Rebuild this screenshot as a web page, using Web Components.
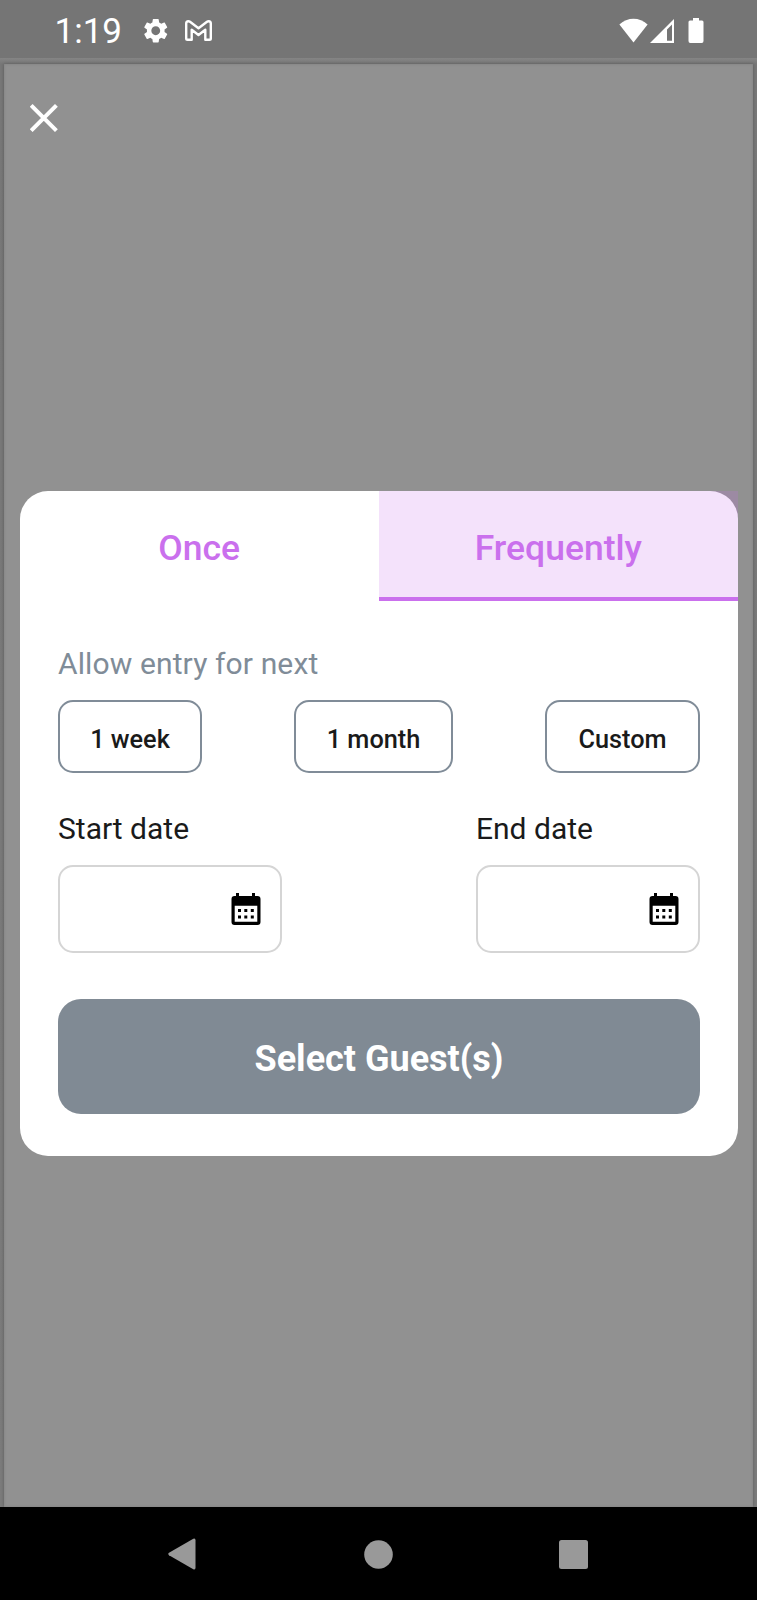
<!DOCTYPE html>
<html lang="en">
<head>
<meta charset="utf-8">
<meta name="viewport" content="width=device-width, initial-scale=1">
<title>Allow entry</title>
<style>
  body {
    margin: 0;
    font-family: Roboto, "Liberation Sans", sans-serif;
    color: #1a1a1a;
  }
</style>
</head>
<body>
<guest-screen>
  <status-bar slot="status" time="1:19"></status-bar>
  <entry-card>
    <entry-tab slot="tabs">Once</entry-tab>
    <entry-tab slot="tabs" selected>Frequently</entry-tab>
    <range-chip slot="ranges" style="width:144px">1 week</range-chip>
    <range-chip slot="ranges" style="width:159px">1 month</range-chip>
    <range-chip slot="ranges" style="width:155px">Custom</range-chip>
    <date-field slot="dates">Start date</date-field>
    <date-field slot="dates">End date</date-field>
    <submit-button slot="action">Select Guest(s)</submit-button>
  </entry-card>
  <nav-bar slot="nav"></nav-bar>
</guest-screen>

<script>
class GuestScreen extends HTMLElement {
  constructor() {
    super();
    this.attachShadow({ mode: "open" });
    this.shadowRoot.innerHTML = `
      <style>
        :host {
          display: flex;
          flex-direction: column;
          width: 757px;
          height: 1600px;
          overflow: hidden;
          background: #757575;
        }
        .frame {
          flex: 1;
          display: flex;
          padding: 6px 4px 0;
          background: linear-gradient(#858585, #777 6px, #7b7b7b);
        }
        .page {
          flex: 1;
          display: flex;
          flex-direction: column;
          background: #919191;
          box-shadow: 0 0 3px rgba(0,0,0,0.25), inset 0 0 3px rgba(0,0,0,0.12);
        }
        .close {
          display: block;
          width: 28px;
          height: 28px;
          margin: 40px 0 0 26px;
        }
        .card {
          margin: 359px 15px 0 15.5px;
        }
      </style>
      <slot name="status"></slot>
      <div class="frame">
        <div class="page">
          <svg class="close" viewBox="0 0 28 28" fill="none" stroke="#fff" stroke-width="4">
            <path d="M1.2 1.4 26.4 26.6M26.4 1.4 1.2 26.6"/>
          </svg>
          <div class="card"><slot></slot></div>
        </div>
      </div>
      <slot name="nav"></slot>
    `;
  }
}

class StatusBar extends HTMLElement {
  constructor() {
    super();
    this.attachShadow({ mode: "open" });
    this.shadowRoot.innerHTML = `
      <style>
        :host {
          display: flex;
          align-items: center;
          box-sizing: border-box;
          height: 58px;
          padding: 3px 53.5px 0 54.5px;
          background: #757575;
          color: white;
        }
        .time {
          width: 86.5px;
          padding-top: 2px;
          font-size: 35px;
          line-height: 40px;
        }
        svg { display: block; fill: white; }
        .mail { margin-left: 14.5px; }
        .wifi { margin-left: auto; }
        .signal { margin-left: 2.5px; }
        .battery { margin-left: 13.5px; }
      </style>
      <span class="time"></span>
      <svg width="29.5" height="29.5" viewBox="0 0 24 24">
        <path d="M19.14 12.94c.04-.3.06-.61.06-.94 0-.32-.02-.64-.07-.94l2.03-1.58c.18-.14.23-.41.12-.61l-1.92-3.32c-.12-.22-.37-.29-.59-.22l-2.39.96c-.5-.38-1.03-.7-1.62-.94l-.36-2.54c-.04-.24-.24-.41-.48-.41h-3.84c-.24 0-.43.17-.47.41l-.36 2.54c-.59.24-1.13.57-1.62.94l-2.39-.96c-.22-.08-.47 0-.59.22L2.74 8.87c-.12.21-.08.47.12.61l2.03 1.58c-.05.3-.09.63-.09.94s.02.64.07.94l-2.03 1.58c-.18.14-.23.41-.12.61l1.92 3.32c.12.22.37.29.59.22l2.39-.96c.5.38 1.03.7 1.62.94l.36 2.54c.05.24.24.41.48.41h3.84c.24 0 .44-.17.47-.41l.36-2.54c.59-.24 1.13-.56 1.62-.94l2.39.96c.22.08.47 0 .59-.22l1.92-3.32c.12-.22.07-.47-.12-.61l-2.01-1.58zM12 15.6c-1.98 0-3.6-1.62-3.6-3.6s1.62-3.6 3.6-3.6 3.6 1.62 3.6 3.6-1.62 3.6-3.6 3.6z"/>
      </svg>
      <svg class="mail" width="27" height="21" viewBox="0 0 27 21">
        <path d="M1.2 18.5V3.5Q1.2 1.2 3.3 1.2 4.2 1.2 5 1.8L13.5 8.2 22 1.8Q22.8 1.2 23.7 1.2 25.8 1.2 25.8 3.5V18.5Q25.8 19.8 24.5 19.8H20.3V9.8L13.5 15 6.7 9.8V19.8H2.5Q1.2 19.8 1.2 18.5Z" fill="none" stroke="#fff" stroke-width="2.4" stroke-linejoin="round"/>
      </svg>
      <svg class="wifi" width="29" height="25" viewBox="0 0 29 25">
        <path d="M0.4 6.6C8.5-1.3 20.5-1.3 28.6 6.6L14.5 24.5Z"/>
      </svg>
      <svg class="signal" width="24" height="24" viewBox="0 0 24 24">
        <path fill-rule="evenodd" d="M24 0V24H0ZM22 5.6 17 10.6V21.8H22Z"/>
      </svg>
      <svg class="battery" width="16" height="25" viewBox="0 0 16 25">
        <path d="M5 0H11V2.5H14Q15.5 2.5 15.5 4V23Q15.5 25 13.7 25H2.3Q0.5 25 0.5 23V4Q0.5 2.5 2 2.5H5Z"/>
      </svg>
    `;
  }
  connectedCallback() {
    this.shadowRoot.querySelector(".time").textContent = this.getAttribute("time");
  }
}

class EntryCard extends HTMLElement {
  constructor() {
    super();
    this.attachShadow({ mode: "open" });
    this.shadowRoot.innerHTML = `
      <style>
        :host {
          display: block;
          box-sizing: border-box;
          height: 665px;
          border-radius: 28px;
          background: white;
        }
        .tabs { display: flex; }
        .body {
          display: flex;
          flex-direction: column;
          padding: 45px 38px 0 38.5px;
        }
        .label {
          color: #808c98;
          font-size: 30px;
          line-height: 36px;
          letter-spacing: 0.12px;
        }
        .ranges, .dates {
          display: flex;
          justify-content: space-between;
        }
        .ranges { margin-top: 18px; }
        .dates { margin: 38px 0 46px; }
      </style>
      <div class="tabs"><slot name="tabs"></slot></div>
      <div class="body">
        <span class="label">Allow entry for next</span>
        <div class="ranges"><slot name="ranges"></slot></div>
        <div class="dates"><slot name="dates"></slot></div>
        <slot name="action"></slot>
      </div>
    `;
  }
}

class EntryTab extends HTMLElement {
  constructor() {
    super();
    this.attachShadow({ mode: "open" });
    this.shadowRoot.innerHTML = `
      <style>
        :host {
          flex: 1;
          display: flex;
          align-items: center;
          justify-content: center;
          box-sizing: border-box;
          height: 110px;
          padding-top: 8px;
          border-bottom: 4px solid transparent;
          color: #ca70ed;
          font-size: 35.5px;
          font-weight: 500;
        }
        :host([selected]) {
          background: rgba(202,112,237,0.2);
          border-bottom-color: #ca70ed;
        }
      </style>
      <slot></slot>
    `;
  }
}

class RangeChip extends HTMLElement {
  constructor() {
    super();
    this.attachShadow({ mode: "open" });
    this.shadowRoot.innerHTML = `
      <style>
        :host {
          display: flex;
          align-items: center;
          justify-content: center;
          box-sizing: border-box;
          height: 73px;
          padding-top: 5px;
          border: 2px solid #808c98;
          border-radius: 15px;
          font-size: 25.3px;
          font-weight: 500;
        }
      </style>
      <slot></slot>
    `;
  }
}

class DateField extends HTMLElement {
  constructor() {
    super();
    this.attachShadow({ mode: "open" });
    this.shadowRoot.innerHTML = `
      <style>
        :host { display: block; width: 224px; }
        .label {
          display: block;
          font-size: 30px;
          line-height: 36px;
        }
        .box {
          display: flex;
          align-items: center;
          justify-content: flex-end;
          box-sizing: border-box;
          height: 88px;
          margin-top: 18px;
          padding-right: 19px;
          border: 2px solid #d5d5d5;
          border-radius: 15px;
        }
      </style>
      <span class="label"><slot></slot></span>
      <div class="box">
        <svg width="30" height="32" viewBox="0 0 30 32">
          <path fill-rule="evenodd" d="M5 0H8V3H21V0H24V3H26.5Q29.5 3 29.5 6V29Q29.5 32 26.5 32H3.5Q0.5 32 0.5 29V6Q0.5 3 3.5 3H5ZM3.7 12.8V28.8H26.3V12.8Z"/>
          <path d="M7 16h3v3h-3zM13.3 16h3v3h-3zM19.8 16h3v3h-3zM7 22.5h3v3h-3zM13.3 22.5h3v3h-3zM19.8 22.5h3v3h-3z"/>
        </svg>
      </div>
    `;
  }
}

class SubmitButton extends HTMLElement {
  constructor() {
    super();
    this.attachShadow({ mode: "open" });
    this.shadowRoot.innerHTML = `
      <style>
        :host {
          display: flex;
          align-items: center;
          justify-content: center;
          box-sizing: border-box;
          height: 115px;
          padding-top: 5px;
          border-radius: 23px;
          background: #808a94;
          color: white;
          font-size: 36px;
          font-weight: 700;
        }
      </style>
      <slot></slot>
    `;
  }
}

class NavBar extends HTMLElement {
  constructor() {
    super();
    this.attachShadow({ mode: "open" });
    this.shadowRoot.innerHTML = `
      <style>
        :host {
          display: flex;
          align-items: center;
          justify-content: space-between;
          box-sizing: border-box;
          height: 93px;
          padding: 1px 169px 0 168px;
          background: black;
        }
        svg { fill: #999; }
      </style>
      <svg width="29" height="32" viewBox="0 0 29 32">
        <path d="M1 14.8 25.3 .8Q27.5 0 27.5 2.2V29.8Q27.5 32 25.3 31.2L1 17.2Q-.5 16 1 14.8Z"/>
      </svg>
      <svg width="29" height="29" viewBox="0 0 29 29"><circle cx="14.5" cy="14.5" r="14.3"/></svg>
      <svg width="29" height="29" viewBox="0 0 29 29"><rect width="29" height="29" rx="2.5"/></svg>
    `;
  }
}

customElements.define("guest-screen", GuestScreen);
customElements.define("status-bar", StatusBar);
customElements.define("entry-card", EntryCard);
customElements.define("entry-tab", EntryTab);
customElements.define("range-chip", RangeChip);
customElements.define("date-field", DateField);
customElements.define("submit-button", SubmitButton);
customElements.define("nav-bar", NavBar);
</script>
</body>
</html>
